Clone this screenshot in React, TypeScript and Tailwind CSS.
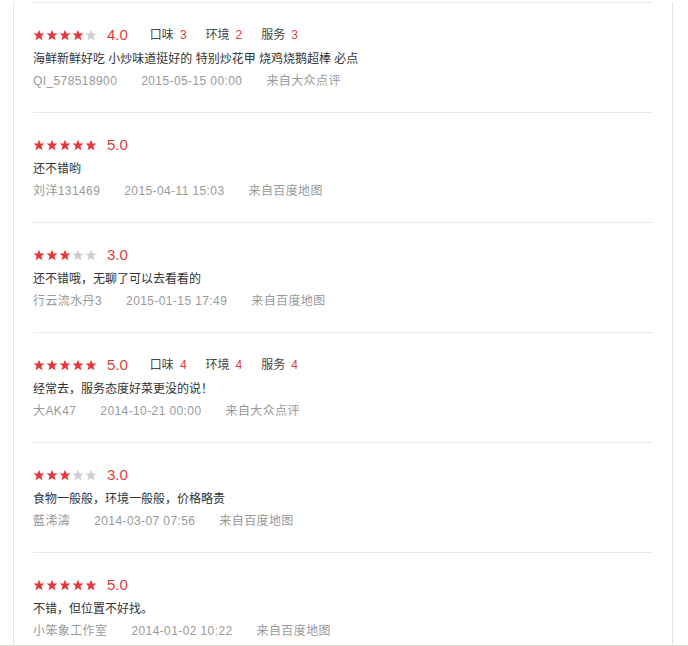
import React from "react";

type Review = {
  stars: number;
  score: string;
  subs?: [string, number][];
  text: string;
  user: string;
  time: string;
  source: string;
};

const reviews: Review[] = [
  {
    stars: 4,
    score: "4.0",
    subs: [["口味", 3], ["环境", 2], ["服务", 3]],
    text: "海鲜新鲜好吃 小炒味道挺好的 特别炒花甲 烧鸡烧鹅超棒 必点",
    user: "QI_578518900",
    time: "2015-05-15 00:00",
    source: "来自大众点评",
  },
  { stars: 5, score: "5.0", text: "还不错哟", user: "刘洋131469", time: "2015-04-11 15:03", source: "来自百度地图" },
  { stars: 3, score: "3.0", text: "还不错哦，无聊了可以去看看的", user: "行云流水丹3", time: "2015-01-15 17:49", source: "来自百度地图" },
  {
    stars: 5,
    score: "5.0",
    subs: [["口味", 4], ["环境", 4], ["服务", 4]],
    text: "经常去，服务态度好菜更没的说！",
    user: "大AK47",
    time: "2014-10-21 00:00",
    source: "来自大众点评",
  },
  { stars: 3, score: "3.0", text: "食物一般般，环境一般般，价格略贵", user: "藍浠濤", time: "2014-03-07 07:56", source: "来自百度地图" },
  { stars: 5, score: "5.0", text: "不错，但位置不好找。", user: "小笨象工作室", time: "2014-01-02 10:22", source: "来自百度地图" },
];

function Star({ on }: { on: boolean }) {
  return (
    <svg width="12" height="12" viewBox="0 0 24 24" className="mr-px">
      <polygon
        points="12,1.5 15,9 23,9.2 16.8,14.2 19,22.5 12,17.8 5,22.5 7.2,14.2 1,9.2 9,9"
        fill={on ? "#e4393c" : "#cccccc"}
      />
    </svg>
  );
}

function ReviewItem({ r }: { r: Review }) {
  return (
    <div className="border-t border-[#e8e8e8] pt-[23px] pb-[20px]">
      <div className="flex h-[18px] items-center leading-[18px]">
        <div className="flex items-center">
          {[0, 1, 2, 3, 4].map((i) => (
            <Star key={i} on={i < r.stars} />
          ))}
        </div>
        <span className="ml-[9px] text-[15px] text-[#e4393c]">{r.score}</span>
        {r.subs && (
          <div className="ml-[22px] flex items-center text-[12px] text-[#444]">
            {r.subs.map(([k, v]) => (
              <span key={k} className="mr-[19px]">
                {k}
                <span className="ml-[6px] text-[#e4393c]">{v}</span>
              </span>
            ))}
          </div>
        )}
      </div>
      <div className="mt-[4px] text-[12px] leading-[22px] text-[#333]">{r.text}</div>
      <div className="flex text-[12px] leading-[22px] tracking-[0.4px] text-[#999]">
        <span className="mr-[24px]">{r.user}</span>
        <span className="mr-[24px]">{r.time}</span>
        <span>{r.source}</span>
      </div>
    </div>
  );
}

export default function App() {
  return (
    <div
      className="flex h-[646px] w-[688px] flex-col bg-white"
      style={{ fontFamily: '"Liberation Sans", "Noto Sans CJK SC", sans-serif' }}
    >
      <div className="h-[645px] overflow-hidden">
        <div className="ml-[13px] h-full w-[660px] border-x border-[#e5e5e5] px-[19px]">
          <div className="mt-[2px]">
            {reviews.map((r, i) => (
              <ReviewItem key={i} r={r} />
            ))}
          </div>
        </div>
      </div>
      <div className="h-px bg-[#d8d8d0]" />
    </div>
  );
}
